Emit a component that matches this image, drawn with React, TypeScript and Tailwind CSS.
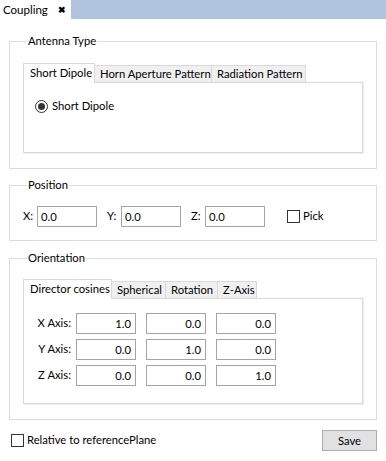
import React from "react";

const font = { fontFamily: 'Lato, "Noto Sans", sans-serif' };

function Tabs({ tabs }: { tabs: { label: string; w: string }[] }) {
  return (
    <div className="flex items-end h-[19px]">
      {tabs.map((t, i) =>
        i === 0 ? (
          <div
            key={t.label}
            className={`relative z-10 -mb-px h-[20px] ${t.w} whitespace-nowrap border border-b-0 border-[#d9d9d9] bg-white pl-[6px] leading-[18px]`}
          >
            {t.label}
          </div>
        ) : (
          <div
            key={t.label}
            className={`h-[17px] ${t.w} whitespace-nowrap border border-l-0 border-b-0 border-[#d9d9d9] bg-[#f0f0f0] pl-[5px] leading-[16px]`}
          >
            {t.label}
          </div>
        )
      )}
    </div>
  );
}

function Group({ title, children, className = "" }: { title: string; children: React.ReactNode; className?: string }) {
  return (
    <fieldset className={`border border-[#dcdcdc] px-[13px] ${className}`}>
      <legend className="ml-[4px] px-[1px] leading-[16px]">{title}</legend>
      {children}
    </fieldset>
  );
}

function Field({ value, right }: { value: string; right?: boolean }) {
  return (
    <div
      className={`h-[21px] w-[60px] border border-[#a5a5a5] bg-white leading-[19px] ${right ? "text-right pr-[4px]" : "pl-[3px]"}`}
    >
      {value}
    </div>
  );
}

function Check({ label }: { label: string }) {
  return (
    <div className="flex items-center gap-[3px]">
      <div className="h-[13px] w-[13px] border border-[#333] bg-white" />
      <span>{label}</span>
    </div>
  );
}

const matrix = [
  ["X Axis:", "1.0", "0.0", "0.0"],
  ["Y Axis:", "0.0", "1.0", "0.0"],
  ["Z Axis:", "0.0", "0.0", "1.0"],
];

export default function App() {
  return (
    <div style={font} className="w-[386px] h-[461px] bg-white text-[11.25px] text-black overflow-hidden">
      {/* title tab strip */}
      <div className="flex h-[19px] bg-[#b0c4de]">
        <div className="flex w-[71px] items-center bg-white pl-[3px]">
          <span className="text-[11.5px] leading-[16px]">Coupling</span>
          <span className="ml-[10px] text-[9px] font-bold leading-none">✖</span>
        </div>
      </div>

      <div className="px-[9px] pt-[14px]">
        <Group title="Antenna Type" className="pb-[15px]">
          <div className="mt-[14px]">
            <Tabs
              tabs={[
                { label: "Short Dipole", w: "w-[72px]" },
                { label: "Horn Aperture Pattern", w: "w-[117px]" },
                { label: "Radiation Pattern", w: "w-[94px]" },
              ]}
            />
            <div className="h-[71px] border border-[#d9d9d9] shadow-[1px_1px_0_#eeeeee] pl-[11px] pt-[15px]">
              <div className="flex items-center gap-[4px]">
                <div className="flex h-[13px] w-[13px] items-center justify-center rounded-full border border-[#333]">
                  <div className="h-[7px] w-[7px] rounded-full bg-[#333]" />
                </div>
                <span className="leading-[16px]">Short Dipole</span>
              </div>
            </div>
          </div>
        </Group>

        <Group title="Position" className="mt-[8px] pb-[13px]">
          <div className="mt-[13px] flex items-center">
            <span className="w-[14px]">X:</span>
            <Field value="0.0" />
            <span className="ml-[10px] w-[14px]">Y:</span>
            <Field value="0.0" />
            <span className="ml-[10px] w-[14px]">Z:</span>
            <Field value="0.0" />
            <div className="ml-[22px]">
              <Check label="Pick" />
            </div>
          </div>
        </Group>

        <Group title="Orientation" className="mt-[9px] pb-[15px]">
          <div className="mt-[13px]">
            <Tabs
              tabs={[
                { label: "Director cosines", w: "w-[89px]" },
                { label: "Spherical", w: "w-[54px]" },
                { label: "Rotation", w: "w-[52px]" },
                { label: "Z-Axis", w: "w-[39px]" },
              ]}
            />
            <div className="h-[106px] border border-[#d9d9d9] shadow-[1px_1px_0_#eeeeee] pt-[14px]">
              <div className="flex flex-col gap-[5px]">
                {matrix.map((r) => (
                  <div key={r[0]} className="flex items-center">
                    <span className="w-[52px] text-right pr-[5px]">{r[0]}</span>
                    <div className="flex gap-[10px]">
                      <Field value={r[1]} right />
                      <Field value={r[2]} right />
                      <Field value={r[3]} right />
                    </div>
                  </div>
                ))}
              </div>
            </div>
          </div>
        </Group>

        <div className="mt-[10px] flex items-center justify-between pl-[2px]">
          <Check label="Relative to referencePlane" />
          <button className="h-[21px] w-[55px] border border-[#adadad] bg-[#e1e1e1] leading-[19px]">Save</button>
        </div>
      </div>
    </div>
  );
}
